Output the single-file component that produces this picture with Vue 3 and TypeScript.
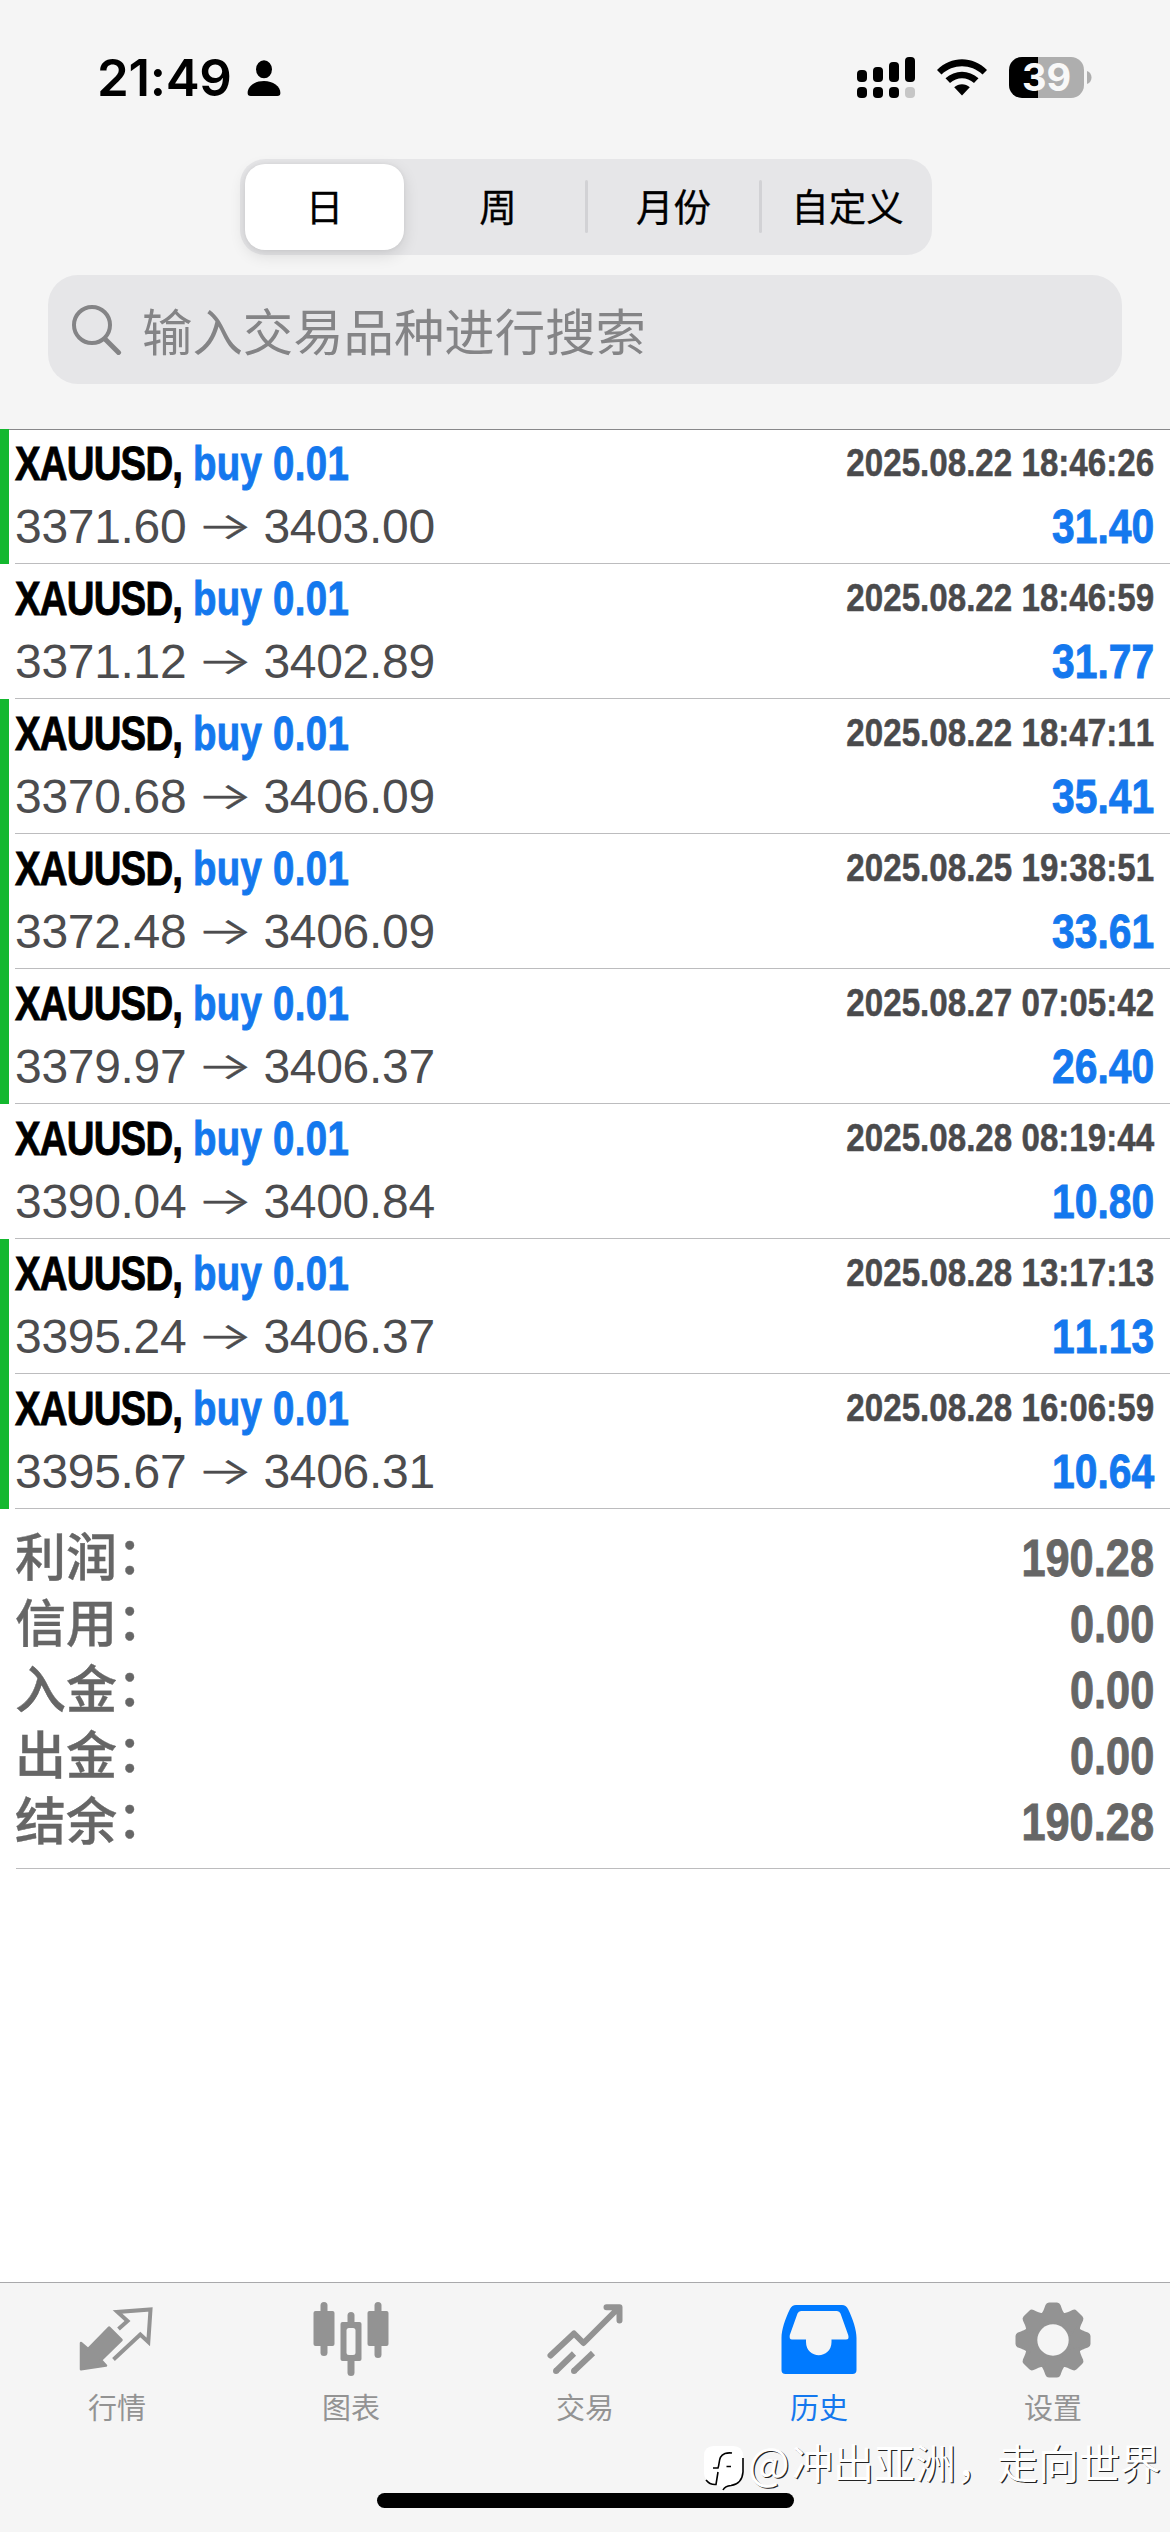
<script setup lang="ts">
interface Deal {
  volume: string
  open: string
  close: string
  time: string
  profit: string
  marked: boolean
}

const periods: string[] = ['日', '周', '月份', '自定义']

const deals: Deal[] = [
  { volume: '0.01', open: '3371.60', close: '3403.00', time: '2025.08.22 18:46:26', profit: '31.40', marked: true },
  { volume: '0.01', open: '3371.12', close: '3402.89', time: '2025.08.22 18:46:59', profit: '31.77', marked: false },
  { volume: '0.01', open: '3370.68', close: '3406.09', time: '2025.08.22 18:47:11', profit: '35.41', marked: true },
  { volume: '0.01', open: '3372.48', close: '3406.09', time: '2025.08.25 19:38:51', profit: '33.61', marked: true },
  { volume: '0.01', open: '3379.97', close: '3406.37', time: '2025.08.27 07:05:42', profit: '26.40', marked: true },
  { volume: '0.01', open: '3390.04', close: '3400.84', time: '2025.08.28 08:19:44', profit: '10.80', marked: false },
  { volume: '0.01', open: '3395.24', close: '3406.37', time: '2025.08.28 13:17:13', profit: '11.13', marked: true },
  { volume: '0.01', open: '3395.67', close: '3406.31', time: '2025.08.28 16:06:59', profit: '10.64', marked: true },
]

const totals: { label: string; value: string }[] = [
  { label: '利润', value: '190.28' },
  { label: '信用', value: '0.00' },
  { label: '入金', value: '0.00' },
  { label: '出金', value: '0.00' },
  { label: '结余', value: '190.28' },
]
</script>

<template>
  <div class="screen">
    <header class="top">
      <div class="status">
        <div class="clock">
          <span>21:49</span>
          <svg width="34" height="37" viewBox="0 0 34 37"><ellipse cx="17" cy="9.3" rx="8" ry="9" /><path d="M.6 33C.6 26 8 21 17 21s16.4 5 16.4 12c0 2-1 3-3 3H3.600C1.600 36 .6 35 .6 33Z" /></svg>
        </div>
        <div class="signals">
          <svg width="59" height="42" viewBox="0 0 59 42">
            <rect x="0" y="13" width="10" height="12" rx="4" /><rect x="16" y="10" width="10" height="15" rx="4" /><rect x="32" y="5" width="10" height="20" rx="4" /><rect x="48" y="0" width="10" height="25" rx="4" />
            <rect x="0" y="30" width="10" height="11" rx="4" /><rect x="16" y="30" width="10" height="11" rx="4" /><rect x="32" y="30" width="10" height="11" rx="4" /><rect x="48" y="30" width="10" height="11" rx="4" fill="#c6c6c6" />
          </svg>
          <svg class="wifi" width="50" height="38" viewBox="0 0 50 38">
            <path d="M0 11C14-3.200 36-3.200 50 11L45.500 15.500C34 4.500 16 4.500 4.500 15.500Z" />
            <path d="M8.500 19.200C18 10.500 32 10.500 41.500 19.200L37 24C30 17.500 20 17.500 13 24Z" />
            <path d="M17.200 28.200C21.500 24.300 28.500 24.300 32.800 28.200L25 36.600Z" />
          </svg>
          <div class="battery"><span>39</span></div>
          <svg class="nub" width="5" height="13" viewBox="0 0 5 13"><path d="M0 0C6 2 6 11 0 13Z" fill="#aeaeae" /></svg>
        </div>
      </div>
      <nav class="segments">
        <button v-for="(p, i) in periods" :key="p" :class="['segment', { active: i === 0, divided: i > 1 }]">{{ p }}</button>
      </nav>
      <div class="search">
        <svg width="50" height="50" viewBox="0 0 50 50" fill="none" stroke="#848486" stroke-linecap="round"><circle cx="20" cy="20" r="18" stroke-width="4" /><path d="M33.500 34.500L46.500 47.500" stroke-width="5" /></svg>
        <span>输入交易品种进行搜索</span>
      </div>
    </header>

    <main class="list">
      <article v-for="d in deals" :key="d.time" :class="['deal', { marked: d.marked }]">
        <div class="body">
          <div class="line first">
            <div class="title"><span class="symbol">XAUUSD,</span> <span class="side">buy {{ d.volume }}</span></div>
            <span class="time">{{ d.time }}</span>
          </div>
          <div class="line second">
            <div class="prices"><span>{{ d.open }}</span><span class="arrow">→</span><span>{{ d.close }}</span></div>
            <span class="profit">{{ d.profit }}</span>
          </div>
        </div>
      </article>
      <section class="totals">
        <div v-for="t in totals" :key="t.label" class="total">
          <span class="label">{{ t.label }}<i>：</i></span>
          <span class="value">{{ t.value }}</span>
        </div>
      </section>
    </main>

    <footer class="tabs">
      <div class="tab">
        <svg width="76" height="76" viewBox="0 0 76 76">
          <path d="M2 41L9 47 30 25.500 42.500 38 22 58 27 63.500 2 67.300Z" fill="#939393" stroke="#939393" stroke-width="2.500" stroke-linejoin="round" />
          <path d="M39.500 27L48.500 19 38.500 10 71.500 7.500 69.300 40 61.300 32.500 34.500 57.500" fill="none" stroke="#939393" stroke-width="4" />
        </svg>
        <span>行情</span>
      </div>
      <div class="tab">
        <svg width="76" height="76" viewBox="0 0 76 76" fill="#939393">
          <rect x="7.500" y="0" width="7" height="54" rx="3.500" /><rect x=".5" y="9" width="21" height="35" rx="2" />
          <rect x="34.500" y="10" width="7" height="64" rx="3.500" /><rect x="27.500" y="20" width="21" height="39" rx="2" /><rect x="33.500" y="26" width="9" height="27" rx="2.500" fill="#f5f5f5" />
          <rect x="61.500" y="0" width="7" height="56" rx="3.500" /><rect x="54.500" y="9" width="21" height="35" rx="2" />
        </svg>
        <span>图表</span>
      </div>
      <div class="tab">
        <svg width="76" height="76" viewBox="0 0 76 76" fill="none" stroke="#939393" stroke-width="6" stroke-linejoin="round" stroke-linecap="round">
          <path d="M3.500 53.500L27 31.500 36.500 41 69.500 8M59.500 5.200H72.500V18.500" />
          <path d="M9 69L27 51.500M27 69L46 51" stroke-linecap="butt" /><path d="M9 69h.01M27 69h.01" />
        </svg>
        <span>交易</span>
      </div>
      <div class="tab current">
        <svg width="76" height="76" viewBox="0 0 76 76">
          <path fill="#007aff" fill-rule="evenodd" d="M15 3H61Q65 3 67 7C72 17 75.500 28 75.500 36V68Q75.500 72 71.500 72H4.500Q.5 72 .5 68V36C.5 28 4 17 9 7Q11 3 15 3ZM20 9Q17.500 9 16.500 11.500L8.800 33Q8 37.500 11 37.500H25V40C25 57.500 50.500 57.500 50.500 40V37.500H65Q68.500 37.500 67.200 33L59.500 11.500Q58.500 9 56 9Z" />
        </svg>
        <span>历史</span>
      </div>
      <div class="tab">
        <svg width="76" height="76" viewBox="-38 -38 76 76">
          <g fill="#939393">
            <circle r="29" />
            <path v-for="n in 8" :key="n" :transform="`rotate(${n * 45})`" d="M-14-24C-10-27-9-31-7.500-35Q-6.500-37.500-4-37.500H4Q6.500-37.500 7.500-35C9-31 10-27 14-24L0-15Z" />
          </g>
          <circle r="15.700" fill="#f5f5f5" />
        </svg>
        <span>设置</span>
      </div>
    </footer>
    <div class="home"></div>
    <div class="mark">
      <svg width="42" height="48" viewBox="0 0 42 48">
        <path d="M11 2H30Q40 2 40 12V28Q40 40 28 41Q22 42 20 46Q18 41 12 41Q1 38 1 29V12Q1 2 11 2Z" fill="#fff" />
        <path d="M40 14V28Q39 40 28 41.500Q22 42 20 46M3 36Q7 41 13 40.500L15 28M10 24H15C17 19 15 12 22 9.500Q25 8.500 29 9M23.500 22.500H28" fill="none" stroke="#000" stroke-width="1.600" />
      </svg>
      <span class="at">@</span><span class="name">冲出亚洲，走向世界</span>
    </div>
  </div>
</template>

<style>
body { margin: 0; background: #fff; }
</style>

<style scoped>
.screen {
  position: relative;
  display: flex;
  flex-direction: column;
  width: 1170px;
  height: 2532px;
  overflow: hidden;
  background: #fff;
  font-family: "Liberation Sans", "Noto Sans CJK SC", sans-serif;
}
svg { display: block; flex: none; }
.top {
  box-sizing: border-box;
  height: 430px;
  background: #f5f5f5;
  border-bottom: 1px solid #88888a;
}
.status {
  display: flex;
  justify-content: space-between;
  box-sizing: border-box;
  height: 159px;
  padding: 57px 78px 0 97px;
}
.clock { display: flex; align-items: flex-start; }
.clock span {
  width: 150px;
  font: 600 51px/42px Inter, sans-serif;
  letter-spacing: -0.3px;
}
.clock svg { margin-top: 3px; }
.signals { display: flex; align-items: flex-start; }
.wifi { margin: 2px 22px 0 21px; }
.battery {
  width: 75px;
  height: 41px;
  border-radius: 13px;
  background: linear-gradient(90deg, #000 29px, #aeaeae 29px);
  color: #f8f8f8;
  font: 700 38px/41px Inter, sans-serif;
  text-align: center;
}
.nub { margin: 14px 0 0 3px; }
.segments {
  display: flex;
  box-sizing: border-box;
  width: 692px;
  height: 96px;
  margin-left: 240px;
  padding: 5px;
  border-radius: 25px;
  background: #e6e6e8;
}
.segment {
  position: relative;
  flex: none;
  width: 174px;
  border: 0;
  padding: 0 0 4px;
  background: none;
  color: #000;
  font: 400 37.500px/80px "Noto Sans CJK SC", sans-serif;
  -webkit-text-stroke: 0.300px #000;
}
.segment.active {
  width: 159px;
  margin-right: 7px;
  border-radius: 20px;
  background: #fff;
  box-shadow: 0 5px 16px rgba(0, 0, 0, .12), 0 0 4px rgba(0, 0, 0, .05);
}
.segment.divided { padding-left: 3px; }
.segment.divided::before {
  content: "";
  position: absolute;
  left: 0;
  top: 16px;
  width: 3px;
  height: 53px;
  border-radius: 2px;
  background: #d2d2d5;
}
.search {
  display: flex;
  align-items: center;
  box-sizing: border-box;
  height: 109px;
  margin: 20px 48px 0;
  padding-left: 24px;
  border-radius: 30px;
  background: #e6e6e8;
  color: #848486;
}
.search span {
  margin-left: 20px;
  font: 400 50.400px/107px "Noto Sans CJK SC", sans-serif;
}
.list { margin-top: -1px; }
.deal {
  box-sizing: border-box;
  height: 135px;
  border-left: 9px solid transparent;
}
.deal.marked { border-left-color: #14b82f; }
.body {
  box-sizing: border-box;
  height: 135px;
  margin-left: 6px;
  padding: 1px 16px 0 0;
  border-bottom: 1px solid #bcbcbe;
}
.line { display: flex; justify-content: space-between; white-space: nowrap; }
/* The condensed bold face is made by narrowing the regular-width one. */
.title, .time, .profit, .value {
  font-family: "Liberation Sans", sans-serif;
  font-weight: 700;
  font-kerning: none;
  -webkit-text-stroke: 0.900px currentColor;
}
.title { transform: scaleX(.8); transform-origin: 0 50%; }
.time, .profit, .value { transform: scaleX(.85); transform-origin: 100% 50%; }
.first { height: 67px; line-height: 67px; font-size: 48px; }
.symbol { letter-spacing: -1px; color: #000; }
.side { color: #1478ee; letter-spacing: 0.400px; }
.time { font-size: 39px; line-height: 65px; color: #4a4a4c; -webkit-text-stroke-width: 0.500px; }
.second { height: 62px; line-height: 60px; }
.prices { display: flex; color: #4c4c4e; font-size: 48px; letter-spacing: -0.300px; }
.arrow {
  width: 77px;
  text-align: center;
  font: 300 37px/57px Inter, sans-serif;
  transform: scaleX(1.6);
  -webkit-text-stroke: 0.400px currentColor;
}
.profit { font-size: 48px; line-height: 60px; color: #1478ee; }
.totals {
  box-sizing: border-box;
  height: 360px;
  margin-left: 16px;
  padding: 17px 16px 0 0;
  border-bottom: 1px solid #bcbcbe;
}
.total { display: flex; justify-content: space-between; height: 66px; color: #666; }
.label {
  display: flex;
  margin-left: -1px;
  font: 500 51px/57px "Noto Sans CJK SC", sans-serif;
  -webkit-text-stroke: 0.400px currentColor;
}
.label i { margin-top: -2px; font-style: normal; }
.value { font-size: 51px; line-height: 66px; }
.tabs {
  display: flex;
  box-sizing: border-box;
  height: 250px;
  margin-top: auto;
  border-top: 1px solid #a9a9ab;
  background: #f5f5f5;
}
.tab {
  display: flex;
  flex: 1;
  flex-direction: column;
  align-items: center;
  padding-top: 19px;
  color: #939393;
  font: 400 29px/40px "Noto Sans CJK SC", sans-serif;
}
.tab span { margin-top: 8px; }
.tab.current { color: #1478ee; }
.home {
  position: absolute;
  left: 377px;
  bottom: 24px;
  width: 417px;
  height: 15px;
  border-radius: 8px;
  background: #000;
}
.mark {
  position: absolute;
  left: 703px;
  top: 2444px;
  display: flex;
  color: #fff;
  font: 400 41px/34px "Noto Sans CJK SC", sans-serif;
  text-shadow: 1.300px 1.300px 0.500px #222;
  white-space: nowrap;
}
.at { width: 44px; margin-left: 3px; font-size: 44px; }
</style>
